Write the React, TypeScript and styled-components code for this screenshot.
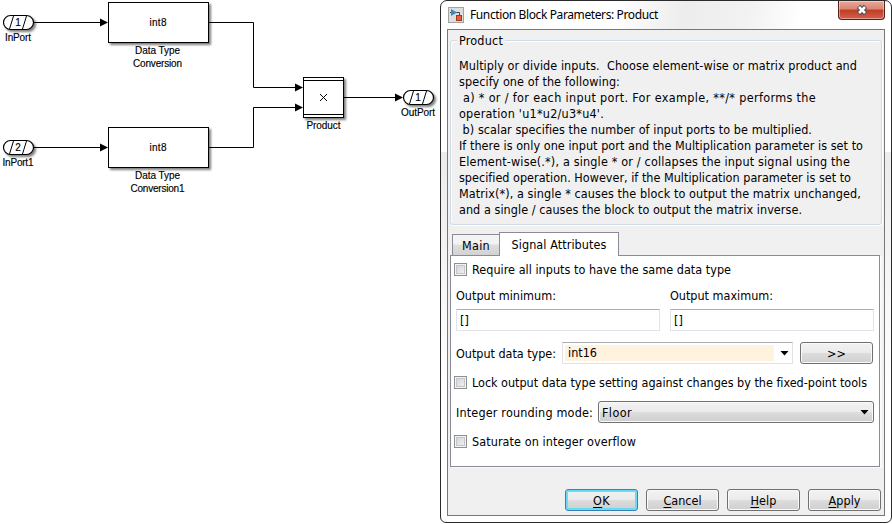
import React, { ReactNode, useLayoutEffect, useRef, useState } from "react";
import styled, { createGlobalStyle, css } from "styled-components";

const Global = createGlobalStyle`
  * { box-sizing: border-box; }
  html, body { margin: 0; padding: 0; background: #fff; overflow: hidden; }
`;

const Page = styled.main`
  display: flex;
  width: 892px;
  height: 524px;
  background: #fff;
`;

const Canvas = styled.svg`
  flex: none;
  width: 440px;
  height: 524px;
  font-family: "Liberation Sans", Arial, sans-serif;
  font-size: 10px;
`;

const Wire = styled.path`
  fill: none;
  stroke: #000;
`;

const Shape = styled.g`
  fill: #fff;
  stroke: #000;
  filter: drop-shadow(2px 2px 1.2px rgba(0, 0, 0, 0.5));
`;

const Caption = styled.text`
  text-anchor: middle;
  fill: #000;
  stroke: #000;
  stroke-width: 0.15px;
`;

const Arrow = ({ x, y }: { x: number; y: number }) => (
  <path d={`M${x} ${y}l-8 -4v8z`} fill="#000" />
);

interface PortProps {
  x: number;
  y: number;
  n: string;
  name: string;
  width: number;
}

const Port = ({ x, y, n, name, width }: PortProps) => (
  <g>
    <Shape>
      <rect x={x + 0.5} y={y + 0.5} width="30" height="14" rx="7" strokeWidth="1.2" />
    </Shape>
    <path d={`M${x + 6.5} ${y + 14}L${x + 10.5} ${y + 1}M${x + 19.5} ${y + 14}L${x + 23.5} ${y + 1}`} stroke="#000" />
    <Caption x={x + 15} y={y + 11}>{n}</Caption>
    <Caption x={x + 15} y={y + 26} textLength={width}>{name}</Caption>
  </g>
);

const Conversion = ({ y, suffix }: { y: number; suffix: string }) => (
  <g>
    <Shape>
      <rect x="108.5" y={y + 0.5} width="100" height="40" />
    </Shape>
    <Caption x="158" y={y + 24} textLength="17">int8</Caption>
    <Caption x="157.5" y={y + 52} textLength="45">Data Type</Caption>
    <Caption x="157.5" y={y + 65} textLength={suffix ? 54 : 49}>{"Conversion" + suffix}</Caption>
  </g>
);

const Diagram = () => (
  <Canvas viewBox="0 0 440 524">
    <Wire d="M34 22.5H102M34 147.5H102M209 22.5H253.5V87.5H296M209 147.5H253.5V107.5H296M344 97.5H396" />
    <Arrow x={108} y={22.5} />
    <Arrow x={108} y={147.5} />
    <Arrow x={303} y={87.5} />
    <Arrow x={303} y={107.5} />
    <Arrow x={403} y={97.5} />
    <Port x={3} y={15} n="1" name="InPort" width={26} />
    <Port x={3} y={140} n="2" name="InPort1" width={31} />
    <Port x={403} y={90} n="1" name="OutPort" width={34} />
    <Conversion y={2} suffix="" />
    <Conversion y={127} suffix="1" />
    <Shape>
      <rect x="303.5" y="77.5" width="40" height="40" />
    </Shape>
    <path d="M303 80.5H344M303 114.5H344M320 94l7 7M327 94l-7 7" stroke="#000" />
    <Caption x="323.5" y="129" textLength="34">Product</Caption>
  </Canvas>
);

const Dialog = styled.section`
  flex: none;
  display: flex;
  flex-direction: column;
  width: 452px;
  height: 523px;
  border: 1px solid #2b2b2b;
  border-radius: 7px 7px 6px 6px;
  padding: 0 6px 6px;
  background:
    linear-gradient(100deg, #fff 0, #fff 38%, #ededed 54%, #f2f2f2 68%, #fff 80%) 0 0 / 100% 29px no-repeat,
    linear-gradient(#fff 0 29%, #ececec 29%, #fff 75%);
  font-family: "DejaVu Sans Condensed", "DejaVu Sans", sans-serif;
  font-stretch: condensed;
  font-size: 12.5px;
  color: #000;
`;

const TitleBar = styled.header`
  display: flex;
  height: 28px;
  flex: none;
  padding-left: 1px;
`;

const Title = styled.h1`
  margin: 0 0 0 6px;
  flex: 1;
  font: 12px/28px "Noto Sans", "Open Sans", sans-serif;
`;

const AppIcon = styled.svg`
  margin-top: 6px;
  width: 16px;
  height: 16px;
`;

const Close = styled.button`
  width: 47px;
  height: 19px;
  padding: 0;
  border: 1px solid #54211c;
  border-top: 0;
  border-radius: 0 0 4px 4px;
  background: linear-gradient(#e9a99b 0, #d98572 45%, #bd3d24 50%, #d4604a 100%);
  box-shadow: inset 0 0 0 1px rgba(255, 255, 255, 0.4);
  display: flex;
  justify-content: center;
`;

const Client = styled.div`
  flex: 1;
  border: 1px solid #777;
  background: #f0f0f0;
  padding: 4px 2px 0;
`;

const Group = styled.fieldset`
  position: relative;
  margin: 0;
  height: 191px;
  min-width: 0;
  padding: 0;
  border: 0;
  display: flex;
  flex-direction: column;
`;

const Frame = styled.div`
  flex: 1;
  margin-top: 6px;
  border: 1px solid #d0dbe5;
  border-radius: 3px;
  box-shadow: inset 1px 1px #fff, 1px 1px #fff;
  padding: 17px 0 0 8px;
`;

const Legend = styled.div`
  position: absolute;
  top: 0;
  left: 7px;
  padding: 0 2px;
  line-height: 14px;
  background: #f0f0f0;
`;

const Line = styled.div`
  line-height: 16px;
  height: 16px;
`;

const Tabs = styled.div`
  display: flex;
  align-items: flex-end;
  height: 24px;
  margin: 7px 0 -1px 2px;
  position: relative;
`;

const Tab = styled.div<{ $active?: boolean }>`
  border: 1px solid #8b8b97;
  text-align: center;
  ${(p) =>
    p.$active
      ? css`width: 120px; height: 24px; line-height: 23px; background: #fff; border-bottom: 0;`
      : css`width: 47px; height: 22px; line-height: 21px; border-right: 0; background: linear-gradient(#f3f3f3 45%, #dedede 50%, #d2d2d2);`}
`;

const Panel = styled.div`
  width: 430px;
  height: 212px;
  border: 1px solid #8b8b97;
  background: #fff;
  box-shadow: 2px 1px #fafafa;
  padding: 6px 5px 0 3px;
`;

const Row = styled.div<{ $h: number; $gap?: number; $indent?: number }>`
  display: flex;
  align-items: center;
  height: ${(p) => p.$h}px;
  gap: ${(p) => p.$gap ?? 0}px;
  padding-left: ${(p) => p.$indent ?? 0}px;
`;

const Check = styled.span`
  width: 13px;
  height: 13px;
  flex: none;
  margin-right: 5px;
  border: 1px solid #8e8f8f;
  background: linear-gradient(135deg, #cbcfd5, #f6f6f6);
  box-shadow: inset 0 0 0 1px #f4f4f4, inset 0 0 0 2px #c3c7cc;
`;

const Label = styled.span<{ $w?: number }>`
  flex: none;
  white-space: nowrap;
  width: ${(p) => (p.$w ? p.$w + "px" : "auto")};
`;

const Field = styled.div<{ $w: number }>`
  display: flex;
  align-items: center;
  width: ${(p) => p.$w}px;
  height: 22px;
  flex: none;
  border: 1px solid #e2e3ea;
  border-top-color: #abadb3;
  border-radius: 1px;
  padding: 0 3px;
  background: #fff;
`;

const ComboValue = styled.div`
  flex: 1;
  height: 16px;
  margin: 0 6px 0 -1px;
  padding-left: 3px;
  line-height: 16px;
  background: #fff3e0;
`;

const Button = styled.button<{ $focus?: boolean; $w?: number; $left?: boolean }>`
  width: ${(p) => p.$w ?? 73}px;
  height: 22px;
  flex: none;
  display: flex;
  align-items: center;
  justify-content: ${(p) => (p.$left ? "space-between" : "center")};
  padding: 0 ${(p) => (p.$left ? 4 : 0)}px 0 ${(p) => (p.$left ? 3 : 0)}px;
  border: 1px solid ${(p) => (p.$focus ? "#3c7fb1" : "#707070")};
  border-radius: 3px;
  background: linear-gradient(#f2f2f2 0, #ebebeb 48%, #dddddd 50%, #cfcfcf 100%);
  box-shadow: inset 0 0 0 ${(p) => (p.$focus ? "2px #66dcf8" : "1px #fafafa")};
  font: inherit;
  color: #000;
`;

const Footer = styled.footer`
  display: flex;
  justify-content: flex-end;
  gap: 8px;
  margin: 22px 1px 0 0;
`;

const Hot = styled.span`
  text-decoration: underline;
  text-underline-offset: 2px;
`;

const TextRun = styled.span`
  display: inline-block;
  white-space: pre;
`;

// Spreads the letters of a caption so that it takes the given width.
function Fit({ w, children }: { w: number; children: ReactNode }) {
  const ref = useRef<HTMLSpanElement>(null);
  const [spacing, setSpacing] = useState(0);
  useLayoutEffect(() => {
    const el = ref.current;
    if (!el || !el.textContent) return;
    el.style.letterSpacing = "0px";
    const next = (w - el.getBoundingClientRect().width) / el.textContent.length;
    el.style.letterSpacing = `${next}px`;
    setSpacing(next);
  }, [w, children]);
  return <TextRun ref={ref} style={{ letterSpacing: spacing }}>{children}</TextRun>;
}

const Down = () => (
  <svg width="9" height="5" viewBox="0 0 9 5"><path d="M0.500 0h8L4.500 4.500z" fill="#000" /></svg>
);

const lines: [string, number][] = [
  ["Multiply or divide inputs.  Choose element-wise or matrix product and", 398],
  ["specify one of the following:", 161],
  [" a) * or / for each input port. For example, **/* performs the", 357],
  ["operation 'u1*u2/u3*u4'.", 145],
  [" b) scalar specifies the number of input ports to be multiplied.", 353],
  ["If there is only one input port and the Multiplication parameter is set to", 404],
  ["Element-wise(.*), a single * or / collapses the input signal using the", 391],
  ["specified operation. However, if the Multiplication parameter is set to", 392],
  ["Matrix(*), a single * causes the block to output the matrix unchanged,", 402],
  ["and a single / causes the block to output the matrix inverse.", 343],
];

export default function App() {
  return (
    <Page>
      <Global />
      <Diagram />
      <Dialog>
        <TitleBar>
          <AppIcon viewBox="0 0 16 16">
            <rect x="0.5" y="0.5" width="15" height="15" fill="#dedede" stroke="#a2a2a2" />
            <path d="M2 5.500h9.500V9" fill="none" stroke="#454545" />
            <path d="M3 2l6 3.500l-6 3.500z" fill="#2f8fc4" />
            <rect x="8.500" y="8.500" width="5" height="5" fill="#e0643a" stroke="#a8381c" />
          </AppIcon>
          <Title><Fit w={188}>Function Block Parameters: Product</Fit></Title>
          <Close aria-label="Close">
            <svg width="12" height="18" viewBox="0 0 12 18">
              <path d="M2.500 5.500l7 7M9.500 5.500l-7 7" stroke="#4c4a5c" strokeWidth="4.600" />
              <path d="M3 6l6 6M9 6l-6 6" stroke="#fff" strokeWidth="2.500" />
            </svg>
          </Close>
        </TitleBar>
        <Client>
          <Group>
            <Frame>
              {lines.map(([t, w]) => <Line key={t}><Fit w={w}>{t}</Fit></Line>)}
            </Frame>
            <Legend><Fit w={44}>Product</Fit></Legend>
          </Group>
          <Tabs>
            <Tab><Fit w={28}>Main</Fit></Tab>
            <Tab $active><Fit w={95}>Signal Attributes</Fit></Tab>
          </Tabs>
          <Panel>
            <Row $h={14}><Check /><Label><Fit w={259}>Require all inputs to have the same data type</Fit></Label></Row>
            <Row $h={39} $indent={2}>
              <Label $w={214}><Fit w={100}>Output minimum:</Fit></Label>
              <Label><Fit w={103}>Output maximum:</Fit></Label>
            </Row>
            <Row $h={10} $indent={2} $gap={10}><Field $w={204}>[]</Field><Field $w={204}>[]</Field></Row>
            <Row $h={56} $indent={2}>
              <Label $w={106}><Fit w={100}>Output data type:</Fit></Label>
              <Field $w={231}><ComboValue><Fit w={29}>int16</Fit></ComboValue><Down /></Field>
              <Label $w={7} />
              <Button><Fit w={19}>&gt;&gt;</Fit></Button>
            </Row>
            <Row $h={3}><Check /><Label><Fit w={395}>Lock output data type setting against changes by the fixed-point tools</Fit></Label></Row>
            <Row $h={56} $indent={2}>
              <Label $w={142}><Fit w={137}>Integer rounding mode:</Fit></Label>
              <Button $w={276} $left><Fit w={30}>Floor</Fit><Down /></Button>
            </Row>
            <Row $h={2}><Check /><Label><Fit w={164}>Saturate on integer overflow</Fit></Label></Row>
          </Panel>
          <Footer>
            <Button $focus><Fit w={17}><Hot>O</Hot>K</Fit></Button>
            <Button><Fit w={38}><Hot>C</Hot>ancel</Fit></Button>
            <Button><Fit w={26}><Hot>H</Hot>elp</Fit></Button>
            <Button><Fit w={32}><Hot>A</Hot>pply</Fit></Button>
          </Footer>
        </Client>
      </Dialog>
    </Page>
  );
}
